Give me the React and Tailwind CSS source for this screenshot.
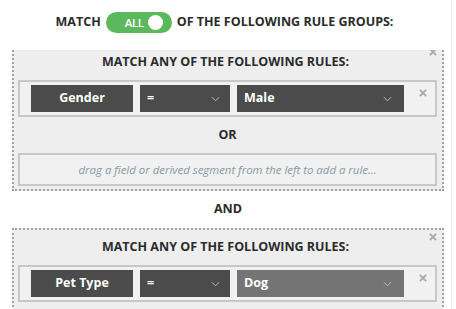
import React from "react";

const CloseIcon = ({ className }) => (
  <svg viewBox="0 0 10 10" className={className}>
    <path d="M2 2 L8 8 M8 2 L2 8" stroke="#a9a9a9" strokeWidth="2.4" strokeLinecap="square" fill="none" />
  </svg>
);

const Chevron = () => (
  <svg viewBox="0 0 10 6" className="w-[9px] h-[6px]">
    <polyline points="1,1 5,5 9,1" stroke="#bdbdbd" strokeWidth="1.1" fill="none" />
  </svg>
);

const RuleRow = ({ field, value, light }) => (
  <div className="w-[419px] h-[37px] border-2 border-[#c7c7c7] bg-[#f1f1f2] flex items-start pl-[11px] pt-[3px] gap-[7px]">
    <div className="w-[102px] h-[27px] bg-[#4b4b4b] text-white font-bold text-[12.5px] flex items-center justify-center">
      {field}
    </div>
    <div className="w-[90px] h-[27px] bg-[#4b4b4b] text-white font-bold text-[12.5px] flex items-center justify-between pl-[7px] pr-[10px]">
      <span>=</span>
      <Chevron />
    </div>
    <div
      className={
        "w-[167px] h-[27px] text-white font-bold text-[12.5px] flex items-center justify-between pl-[7px] pr-[12px] " +
        (light ? "bg-[#747474]" : "bg-[#4b4b4b]")
      }
    >
      <span>{value}</span>
      <Chevron />
    </div>
    <CloseIcon className="w-[8px] h-[8px] ml-[8px] mt-[4px]" />
  </div>
);

const Group = ({ children }) => (
  <div className="relative ml-[12px] w-[432px] border-2 border-dotted border-[#a3a3a3] bg-[#eeeeef] pl-[4px] pr-[5px] pb-[3px]">
    <CloseIcon className="absolute top-[3px] right-[5px] w-[8px] h-[8px]" />
    <div className="h-[35px] pt-[9px] pr-[4px] text-center text-[12.5px] leading-[16px] font-bold text-[#2b2b2b]">
      MATCH ANY OF THE FOLLOWING RULES:
    </div>
    {children}
  </div>
);

export default function App() {
  return (
    <div className="w-[456px] h-[309px] overflow-hidden bg-white font-['Open_Sans',sans-serif] text-[#2b2b2b]">
      <div className="w-[452px] h-full border-r border-[#ececec] flex flex-col">
        <header className="h-[50px] w-[449px] shrink-0 flex justify-center">
          <div className="mt-[12px] h-[21px] flex items-center gap-[5px] text-[12.5px] font-bold">
            <span>MATCH</span>
            <div className="w-[66px] h-[21px] rounded-full bg-[#5cb85c] flex items-center pl-[19px] pr-[9px] justify-between">
              <span className="text-white text-[11.5px] font-semibold tracking-[-0.4px]">ALL</span>
              <span className="w-[15px] h-[15px] rounded-full bg-white" />
            </div>
            <span>OF THE FOLLOWING RULE GROUPS:</span>
          </div>
        </header>
        <div className="flex-1 overflow-hidden">
          <div className="-mt-[7px]">
            <Group>
              <RuleRow field="Gender" value="Male" />
              <div className="h-[36px] flex items-center justify-center text-[12.5px] font-bold">OR</div>
              <div className="w-[419px] h-[33px] border-2 border-[#c7c7c7] bg-[#f1f1f2] flex items-center justify-center italic text-[11.4px] text-[#8899a3]">
                drag a field or derived segment from the left to add a rule...
              </div>
            </Group>
            <div className="ml-[12px] w-[432px] h-[37px] flex items-center justify-center text-[12.5px] font-bold">AND</div>
            <Group>
              <RuleRow field="Pet Type" value="Dog" light />
              <div className="h-[36px]" />
            </Group>
          </div>
        </div>
      </div>
    </div>
  );
}
